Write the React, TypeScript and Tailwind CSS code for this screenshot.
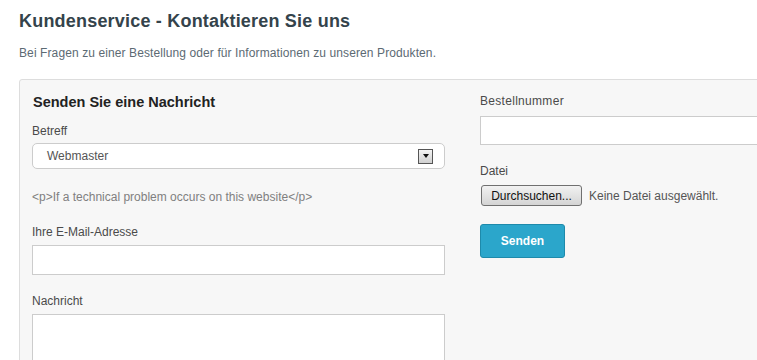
import React from "react";

export default function App() {
  return (
    <div className="w-[757px] h-[360px] overflow-hidden bg-white" style={{ fontFamily: '"Liberation Sans", Arial, sans-serif' }}>
      <div className="pl-[19px] pt-[9px]">
        <h1 className="text-[18px] leading-[24px] font-bold text-[#34434b] tracking-[0.2px] m-0">Kundenservice - Kontaktieren Sie uns</h1>
        <p className="text-[12px] leading-[16px] text-[#5c6a73] tracking-[0.1px] mt-[12px]">Bei Fragen zu einer Bestellung oder für Informationen zu unseren Produkten.</p>
        <div className="mt-[18px] w-[905px] h-[320px] bg-[#f7f7f7] border border-[#dddddd] rounded-[3px] pl-[12px] pt-[12px] flex gap-[35px]">
          <div className="w-[413px] flex flex-col pt-[1px]">
            <h2 className="text-[14.5px] leading-[18px] font-bold text-[#222222] pl-[1px]">Senden Sie eine Nachricht</h2>
            <label className="text-[12px] leading-[16px] text-[#4a4a4a] mt-[12px]">Betreff</label>
            <div className="mt-[4px] h-[26px] bg-white border border-[#cccccc] rounded-[5px] flex items-center pl-[14px] pr-[11px]">
              <span className="text-[12px] text-[#555555] flex-1">Webmaster</span>
              <div className="w-[15px] h-[15px] border border-[#555555] bg-gradient-to-b from-[#f4f4f4] to-[#d0d0d0] flex items-center justify-center">
                <div className="w-0 h-0 border-l-[3.5px] border-r-[3.5px] border-t-[4px] border-l-transparent border-r-transparent border-t-[#111111]" />
              </div>
            </div>
            <p className="text-[12px] leading-[14px] text-[#808080] mt-[21px]">&lt;p&gt;If a technical problem occurs on this website&lt;/p&gt;</p>
            <label className="text-[12px] leading-[16px] text-[#4a4a4a] mt-[20px]">Ihre E-Mail-Adresse</label>
            <div className="mt-[5px] h-[30px] bg-white border border-[#cccccc]" />
            <label className="text-[12px] leading-[16px] text-[#4a4a4a] mt-[18px]">Nachricht</label>
            <div className="mt-[5px] h-[80px] bg-white border border-[#cccccc]" />
          </div>
          <div className="w-[413px] flex flex-col pt-[1px]">
            <label className="text-[12px] leading-[16px] text-[#4a4a4a] tracking-[0.3px]">Bestellnummer</label>
            <div className="mt-[7px] h-[29px] bg-white border border-[#cccccc]" />
            <label className="text-[12px] leading-[16px] text-[#4a4a4a] mt-[18px]">Datei</label>
            <div className="mt-[6px] flex items-center">
              <div className="w-[101px] h-[21px] ml-[1px] border border-[#707070] rounded-[3px] bg-gradient-to-b from-[#f2f2f2] to-[#d4d4d4] flex items-center justify-center text-[12px] text-[#111111]">Durchsuchen...</div>
              <span className="ml-[7px] text-[12px] text-[#555555]">Keine Datei ausgewählt.</span>
            </div>
            <div className="mt-[18px] w-[85px] h-[34px] bg-[#2ba6cb] border border-[#1e8aab] rounded-[3px] flex items-center justify-center text-[12px] font-bold text-white">Senden</div>
          </div>
        </div>
      </div>
    </div>
  );
}
